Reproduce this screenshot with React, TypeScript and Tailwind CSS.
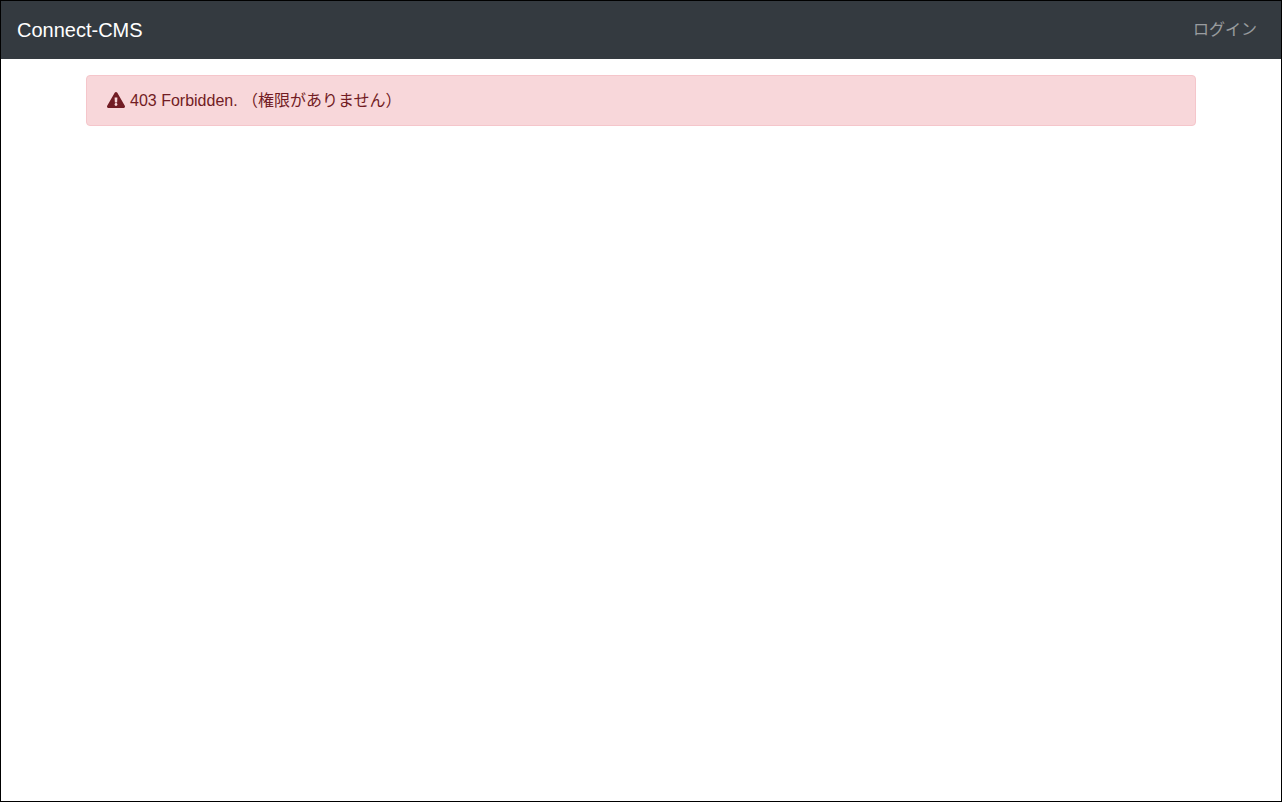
import { FaExclamationTriangle } from 'react-icons/fa';

export default function App() {
  return (
    <div
      className="h-[802px] border border-black bg-white text-base overflow-hidden"
      style={{ fontFamily: '"Liberation Sans", "Noto Sans CJK JP", sans-serif' }}
    >
      <nav className="h-[58px] bg-[#343a40] flex items-center justify-between pl-4 pr-6">
        <a href="#" className="text-xl leading-[30px] text-white">Connect-CMS</a>
        <a href="#" className="text-base leading-6 text-white/50">ログイン</a>
      </nav>
      <main className="w-[1110px] mx-auto pt-4">
        <div className="flex items-center h-[51px] px-5 bg-[#f8d7da] border border-[#f5c6cb] rounded text-[#721c24]">
          <FaExclamationTriangle className="w-[18px] h-4 mr-[5px] -mt-[2px]" />
          <span className="leading-6">403 Forbidden. （権限がありません）</span>
        </div>
      </main>
    </div>
  );
}
